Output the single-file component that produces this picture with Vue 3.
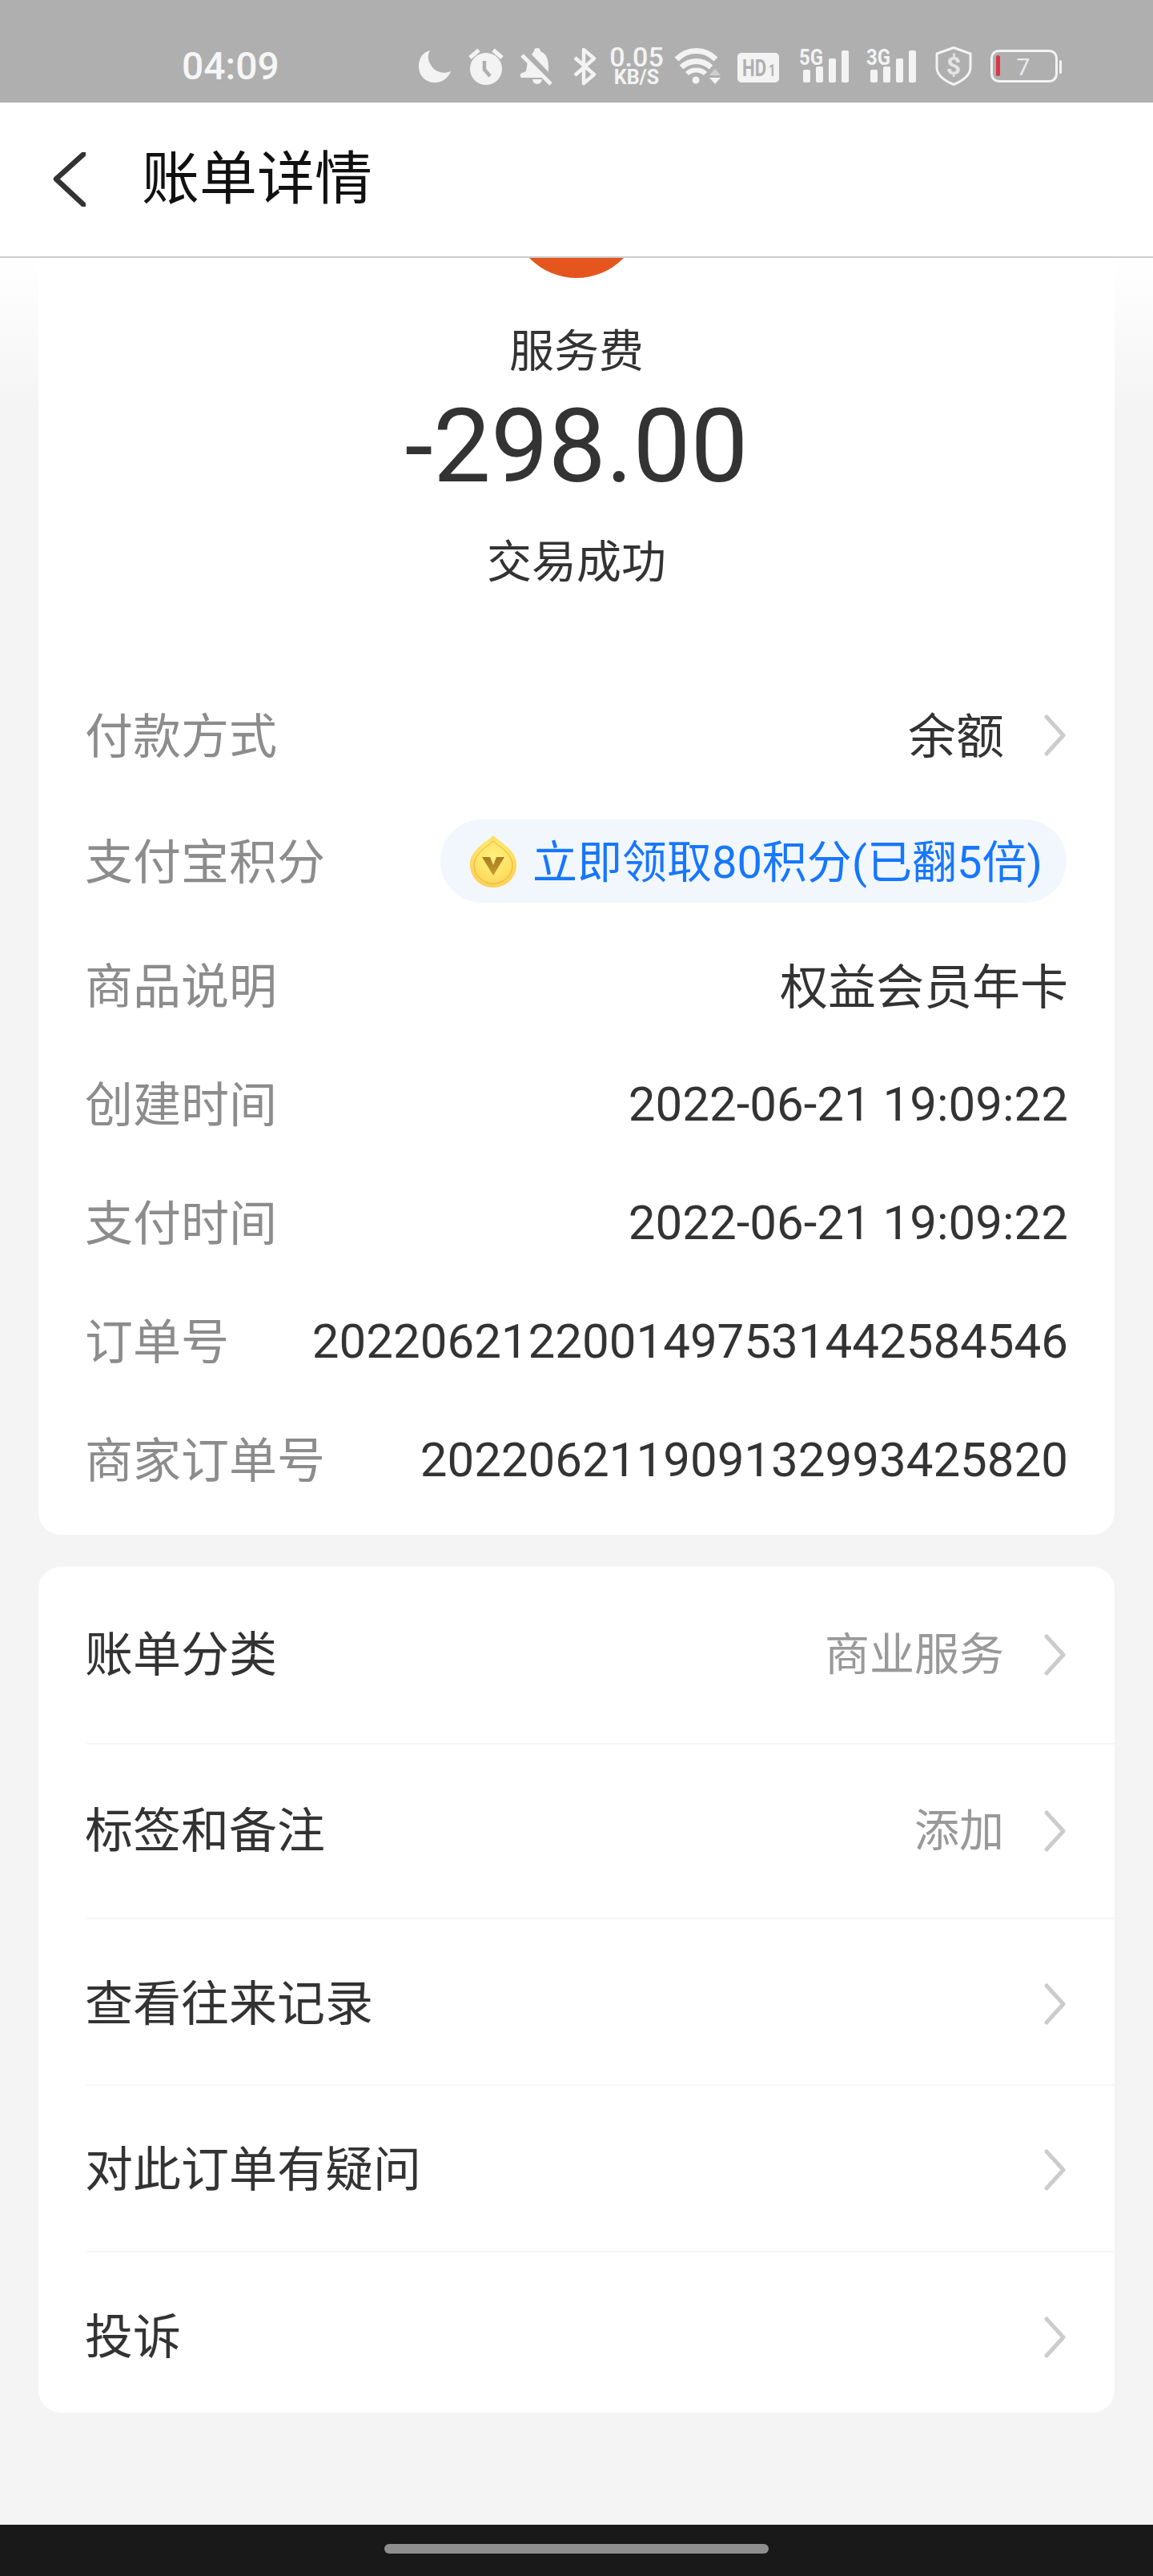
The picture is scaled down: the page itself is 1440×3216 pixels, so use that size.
<script setup>
const infoRows = [
  { label: '商品说明', value: '权益会员年卡', cjk: true },
  { label: '创建时间', value: '2022-06-21 19:09:22' },
  { label: '支付时间', value: '2022-06-21 19:09:22' },
  { label: '订单号', value: '2022062122001497531442584546' },
  { label: '商家订单号', value: '202206211909132993425820' }
]
const listRows = [
  { label: '账单分类', value: '商业服务' },
  { label: '标签和备注', value: '添加' },
  { label: '查看往来记录', value: '' },
  { label: '对此订单有疑问', value: '' },
  { label: '投诉', value: '' }
]
</script>

<template>
  <div class="page">
    <div class="status">
      <span class="time">04:09</span>
      <svg class="status-icons" width="830" height="128" viewBox="510 0 830 128">
        <g fill="#f3f3f3">
          <!-- moon -->
          <path d="M537 63 C526 66 523 75 523 83 C523 95 532 103 543 103 C553 103 560 97 563 89 C553 93 543 90 538 81 C534 75 534 68 537 63Z" />
          <!-- alarm -->
          <circle cx="607" cy="86" r="20" />
          <path d="M587 72 L598 62.5 M627 72 L616 62.5" stroke="#f3f3f3" stroke-width="5" fill="none" />
          <path d="M605 76 V87 L612 95" stroke="#afafaf" stroke-width="4.5" fill="none" />
          <!-- bell -->
          <path d="M671 60 a4 4 0 0 1 4 4 C684 68 685 76 685 86 L685 90 L664 68 C665 66 666 65 667 64 a4 4 0 0 1 4 -4Z M659 77 L678 97 L652 97 Q649 97 650 92 L657 89Z M665 99 H677 a6 6 0 0 1 -12 0Z" />
          <path d="M652 69 L688 105" stroke="#f3f3f3" stroke-width="5" fill="none" />
          <!-- bluetooth -->
          <path d="M718 72 L742 93 L729 104 V62 L742 73 L718 94" stroke="#f3f3f3" stroke-width="4.5" fill="none" stroke-linejoin="round" />
          <text text-anchor="middle"><tspan class="t-speed" x="795" y="83">0.05</tspan><tspan class="t-unit" x="795" y="105">KB/S</tspan></text>
          <!-- wifi -->
          <g fill="none" stroke="#f3f3f3" stroke-linecap="butt">
            <path d="M845 74 C859 60 880 60 894 74" stroke-width="7" />
            <path d="M851 84 C862 74 877 74 888 84" stroke-width="7" />
            <path d="M858 92 C864 86 875 86 881 92" stroke-width="6" />
          </g>
          <circle cx="869" cy="100" r="4.5" />
          <path d="M893 86 L900 94 H886Z" fill="#cfcfcf" />
          <path d="M886 97 H900 L893 105Z" />
          <!-- HD -->
          <rect x="921" y="66" width="52" height="37" rx="5" />
          <text class="t-hd" transform="translate(927 95) scale(.74 1)">HD<tspan class="t-hd1" dx="4">1</tspan></text>
          <!-- 5G -->
          <text class="t-net" x="998" y="81" textLength="30" lengthAdjust="spacingAndGlyphs">5G</text>
          <rect x="1003" y="87" width="9" height="16" rx="2" />
          <rect x="1019" y="83" width="9" height="20" rx="2" />
          <rect x="1035" y="73" width="9" height="30" rx="2" />
          <rect x="1051" y="63" width="9" height="40" rx="2" />
          <!-- 3G -->
          <text class="t-net" x="1082" y="81" textLength="30" lengthAdjust="spacingAndGlyphs">3G</text>
          <rect x="1087" y="87" width="9" height="16" rx="2" />
          <rect x="1103" y="83" width="9" height="20" rx="2" />
          <rect x="1119" y="73" width="9" height="30" rx="2" />
          <rect x="1135" y="63" width="9" height="40" rx="2" />
          <!-- shield -->
          <path d="M1191 59.5 L1212 67 V84 C1212 94 1202 101 1191 105.5 C1180 101 1170 94 1170 84 V67Z" fill="none" stroke="#f3f3f3" stroke-width="3" stroke-linejoin="round" />
          <text class="t-shield" x="1191" y="93" text-anchor="middle">$</text>
          <!-- battery -->
          <rect x="1238.5" y="63.5" width="81" height="38" rx="9" fill="none" stroke="#f3f3f3" stroke-width="3" />
          <rect x="1244" y="69" width="5" height="26" rx="2.5" fill="#dc3545" />
          <rect x="1323" y="75" width="3" height="17" rx="1.5" />
          <text class="t-batt" x="1278" y="94" text-anchor="middle">7</text>
        </g>
      </svg>
    </div>

    <header class="nav">
      <svg class="back" width="41" height="68" viewBox="0 0 41 68">
        <path d="M41 0 L4 33.5 L41 68" fill="none" stroke="#333" stroke-width="6.5" stroke-linejoin="round" />
      </svg>
      <h1 class="title">账单详情</h1>
    </header>

    <main class="content">
      <section class="card summary">
        <div class="logo"></div>
        <div class="kind">服务费</div>
        <div class="amount">-298.00</div>
        <div class="state">交易成功</div>

        <div class="row first">
          <span class="label">付款方式</span>
          <span class="value cjk with-arrow">余额</span>
          <svg class="chev" width="28" height="52" viewBox="0 0 28 52"><path d="M3 3 L24 26 L3 49" /></svg>
        </div>
        <div class="row points">
          <span class="label">支付宝积分</span>
          <span class="pill">
            <svg class="coin" width="58" height="65" viewBox="0 0 58 65">
              <defs>
                <radialGradient id="coin-g" cx="50%" cy="42%" r="62%">
                  <stop offset="0" stop-color="#fff27e" />
                  <stop offset="0.65" stop-color="#fee064" />
                  <stop offset="1" stop-color="#fbcb4e" />
                </radialGradient>
                <linearGradient id="coin-v" x1="0" y1="0" x2="0" y2="1">
                  <stop offset="0" stop-color="#a87c1e" />
                  <stop offset="1" stop-color="#c79a36" />
                </linearGradient>
              </defs>
              <path d="M29 0 C35 7 58 17 58 36 C58 53 45 65 29 65 C13 65 0 53 0 36 C0 17 23 7 29 0Z" fill="url(#coin-g)" />
              <path d="M29 7 C34 12 53 22 53 37 C53 50 42 60 29 60 C16 60 5 50 5 37 C5 22 24 12 29 7Z" fill="none" stroke="#dfa52f" stroke-width="0.8" />
              <path d="M15 27 H25 L29 37 L33 27 H43 L29 50Z" fill="url(#coin-v)" />
            </svg>
            <span class="pill-text">立即领取80积分(已翻5倍)</span>
          </span>
        </div>
        <div v-for="r in infoRows" :key="r.label" class="row">
          <span class="label">{{ r.label }}</span>
          <span class="value" :class="{ cjk: r.cjk }">{{ r.value }}</span>
        </div>
      </section>

      <section class="card list">
        <div v-for="r in listRows" :key="r.label" class="list-row">
          <span class="list-label">{{ r.label }}</span>
          <span v-if="r.value" class="list-value">{{ r.value }}</span>
          <svg class="chev" width="28" height="52" viewBox="0 0 28 52"><path d="M3 3 L24 26 L3 49" /></svg>
        </div>
      </section>
    </main>

    <footer class="home-bar"><div class="home-pill"></div></footer>
  </div>
</template>

<style>
html, body { margin: 0; padding: 0; background: #f4f4f4; }
</style>

<style scoped>
.page {
  width: 1440px;
  height: 3216px;
  display: flex;
  flex-direction: column;
  overflow: hidden;
  font-family: Roboto, "Noto Sans CJK SC", sans-serif;
  color: #333;
  background: #f4f4f4;
}
.status {
  height: 128px;
  flex: none;
  background: #afafaf;
  display: flex;
  align-items: flex-start;
}
.time {
  margin: 54px 0 0 227px;
  font-size: 48px;
  line-height: 58px;
  font-weight: 500;
  color: #f6f6f6;
}
.status-icons { margin-left: auto; margin-right: 100px; display: block; }
.t-speed { font: 500 34px Roboto, sans-serif; }
.t-unit { font: 700 25px Roboto, sans-serif; }
.t-hd { font: 700 30px Roboto, sans-serif; fill: #afafaf; }
.t-hd1 { font: 700 20px Roboto, sans-serif; fill: #afafaf; }
.t-net { font: 700 28px Roboto, sans-serif; }
.t-shield { font: 700 32px Roboto, sans-serif; fill: #e4e4e4; }
.t-batt { font: 400 30px Roboto, sans-serif; fill: #ebebeb; }

.nav {
  height: 194px;
  flex: none;
  box-sizing: border-box;
  background: #fff;
  border-bottom: 2px solid #cccccc;
  display: flex;
  align-items: center;
  padding-left: 66px;
}
.back { display: block; margin-right: 70px; }
.title {
  margin: 0;
  font-size: 72px;
  font-weight: 400;
  line-height: 90px;
  color: #111;
}

.content {
  flex: 1;
  overflow: hidden;
  padding: 0 48px;
  background: linear-gradient(#fff, #f4f4f4 188px);
}
.card {
  background: #fff;
  border-radius: 28px;
}
.summary {
  margin-top: -139px;
  padding: 0 60px 20px;
}
.logo {
  width: 164px;
  height: 164px;
  border-radius: 50%;
  background: #e5561f;
  margin: 0 auto;
}
.kind {
  margin-top: 52px;
  text-align: center;
  font-size: 56px;
  line-height: 80px;
}
.amount {
  margin-top: 8px;
  text-align: center;
  font-size: 128px;
  line-height: 140px;
}
.state {
  margin-top: 35px;
  text-align: center;
  font-size: 56px;
  line-height: 80px;
}
.row {
  height: 148px;
  display: flex;
  align-items: center;
}
.row.first { margin-top: 102px; }
.row.points { margin: 9px 0 7px; }
.label {
  font-size: 60px;
  color: #8c8c8c;
  white-space: nowrap;
  margin-left: -2px;
  padding-bottom: 8px;
}
.value {
  margin-left: auto;
  margin-right: -2px;
  font-size: 60px;
  color: #333;
  white-space: nowrap;
}
.value.cjk { padding-bottom: 6px; }
.value.with-arrow { margin-right: 50px; padding-bottom: 8px; }
.chev { display: block; flex: none; }
.chev path {
  fill: none;
  stroke: #cccccc;
  stroke-width: 5px;
  stroke-linecap: round;
  stroke-linejoin: round;
}
.pill {
  margin-left: auto;
  height: 104px;
  box-sizing: border-box;
  padding: 0 30px 0 37px;
  background: #f2f7fe;
  border-radius: 52px;
  display: flex;
  align-items: center;
  gap: 20px;
}
.pill-text {
  font-size: 56px;
  color: #1677ff;
  white-space: nowrap;
  padding-bottom: 8px;
}

.list {
  margin-top: 40px;
  height: 1056px;
  display: flex;
  flex-direction: column;
}
.list-row {
  margin-left: 60px;
  padding-right: 60px;
  display: flex;
  align-items: center;
  border-bottom: 2px solid #f6f6f6;
  box-sizing: border-box;
}
.list-row:nth-child(1) { height: 222px; }
.list-row:nth-child(2) { height: 218px; }
.list-row:nth-child(3) { height: 208px; padding-top: 6px; }
.list-row:nth-child(4) { height: 208px; padding-top: 4px; }
.list-row:nth-child(5) { height: 200px; border-bottom: 0; padding-top: 12px; }
.list-label {
  font-size: 60px;
  color: #333;
  white-space: nowrap;
  margin-left: -2px;
  margin-right: auto;
  padding-bottom: 12px;
}
.list-value {
  font-size: 56px;
  color: #999;
  margin-right: 50px;
  white-space: nowrap;
  padding-bottom: 12px;
}

.home-bar {
  height: 64px;
  flex: none;
  background: #191919;
  display: flex;
  justify-content: center;
  padding-top: 24px;
  box-sizing: border-box;
}
.home-pill {
  width: 480px;
  height: 12px;
  border-radius: 6px;
  background: #8e8e8e;
}
</style>
